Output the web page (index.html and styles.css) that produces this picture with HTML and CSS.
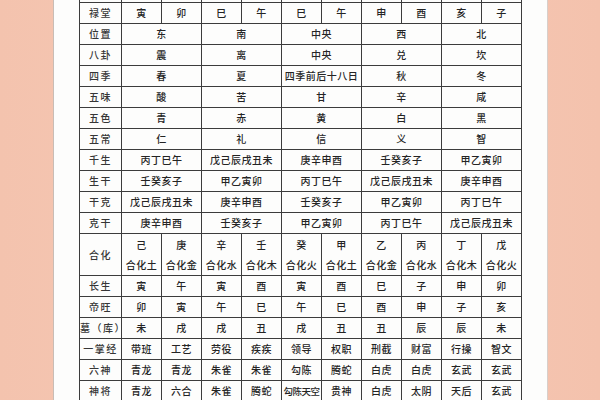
FILE: index.html
```html
<!DOCTYPE html>
<html lang="zh">
<head>
<meta charset="utf-8">
<link rel="stylesheet" href="styles.css">
</head>
<body>
<div class="page">
  <div class="paper">
    <table class="chart">
      <colgroup>
        <col class="c-label">
        <col class="c-d"><col class="c-d"><col class="c-d"><col class="c-d"><col class="c-d">
        <col class="c-d"><col class="c-d"><col class="c-d"><col class="c-d"><col class="c-d">
      </colgroup>
      <tr class="cut"><td></td><td></td><td></td><td></td><td></td><td></td><td></td><td></td><td></td><td></td><td></td></tr>
      <tr><td class="lbl">禄堂</td><td>寅</td><td>卯</td><td>巳</td><td>午</td><td>巳</td><td>午</td><td>申</td><td>酉</td><td>亥</td><td>子</td></tr>
      <tr><td class="lbl">位置</td><td colspan="2">东</td><td colspan="2">南</td><td colspan="2">中央</td><td colspan="2">西</td><td colspan="2">北</td></tr>
      <tr><td class="lbl">八卦</td><td colspan="2">震</td><td colspan="2">离</td><td colspan="2">中央</td><td colspan="2">兑</td><td colspan="2">坎</td></tr>
      <tr><td class="lbl">四季</td><td colspan="2">春</td><td colspan="2">夏</td><td colspan="2">四季前后十八日</td><td colspan="2">秋</td><td colspan="2">冬</td></tr>
      <tr><td class="lbl">五味</td><td colspan="2">酸</td><td colspan="2">苦</td><td colspan="2">甘</td><td colspan="2">辛</td><td colspan="2">咸</td></tr>
      <tr><td class="lbl">五色</td><td colspan="2">青</td><td colspan="2">赤</td><td colspan="2">黄</td><td colspan="2">白</td><td colspan="2">黑</td></tr>
      <tr><td class="lbl">五常</td><td colspan="2">仁</td><td colspan="2">礼</td><td colspan="2">信</td><td colspan="2">义</td><td colspan="2">智</td></tr>
      <tr><td class="lbl">千生</td><td colspan="2">丙丁巳午</td><td colspan="2">戊己辰戌丑未</td><td colspan="2">庚辛申酉</td><td colspan="2">壬癸亥子</td><td colspan="2">甲乙寅卯</td></tr>
      <tr><td class="lbl">生干</td><td colspan="2">壬癸亥子</td><td colspan="2">甲乙寅卯</td><td colspan="2">丙丁巳午</td><td colspan="2">戊己辰戌丑未</td><td colspan="2">庚辛申酉</td></tr>
      <tr><td class="lbl">干克</td><td colspan="2">戊己辰戌丑未</td><td colspan="2">庚辛申酉</td><td colspan="2">壬癸亥子</td><td colspan="2">甲乙寅卯</td><td colspan="2">丙丁巳午</td></tr>
      <tr><td class="lbl">克干</td><td colspan="2">庚辛申酉</td><td colspan="2">壬癸亥子</td><td colspan="2">甲乙寅卯</td><td colspan="2">丙丁巳午</td><td colspan="2">戊己辰戌丑未</td></tr>
      <tr class="tall">
        <td class="lbl">合化</td>
        <td><span class="l1">己</span><span class="l2">合化土</span></td>
        <td><span class="l1">庚</span><span class="l2">合化金</span></td>
        <td><span class="l1">辛</span><span class="l2">合化水</span></td>
        <td><span class="l1">壬</span><span class="l2">合化木</span></td>
        <td><span class="l1">癸</span><span class="l2">合化火</span></td>
        <td><span class="l1">甲</span><span class="l2">合化土</span></td>
        <td><span class="l1">乙</span><span class="l2">合化金</span></td>
        <td><span class="l1">丙</span><span class="l2">合化水</span></td>
        <td><span class="l1">丁</span><span class="l2">合化木</span></td>
        <td><span class="l1">戊</span><span class="l2">合化火</span></td>
      </tr>
      <tr><td class="lbl">长生</td><td>寅</td><td>午</td><td>寅</td><td>酉</td><td>寅</td><td>酉</td><td>巳</td><td>子</td><td>申</td><td>卯</td></tr>
      <tr><td class="lbl">帝旺</td><td>卯</td><td>寅</td><td>午</td><td>巳</td><td>午</td><td>巳</td><td>酉</td><td>申</td><td>子</td><td>亥</td></tr>
      <tr><td class="lbl">墓（库）</td><td>未</td><td>戌</td><td>戌</td><td>丑</td><td>戌</td><td>丑</td><td>丑</td><td>辰</td><td>辰</td><td>未</td></tr>
      <tr><td class="lbl">一掌经</td><td>带班</td><td>工艺</td><td>劳役</td><td>疾疾</td><td>领导</td><td>权职</td><td>刑截</td><td>财富</td><td>行操</td><td>智文</td></tr>
      <tr><td class="lbl">六神</td><td>青龙</td><td>青龙</td><td>朱雀</td><td>朱雀</td><td>勾陈</td><td>腾蛇</td><td>白虎</td><td>白虎</td><td>玄武</td><td>玄武</td></tr>
      <tr><td class="lbl">神将</td><td>青龙</td><td>六合</td><td>朱雀</td><td>腾蛇</td><td class="tight">勾陈天空</td><td>贵神</td><td>白虎</td><td>太阴</td><td>天后</td><td>玄武</td></tr>
    </table>
  </div>
</div>
</body>
</html>
```

FILE: styles.css
```css
html, body {
  margin: 0;
  padding: 0;
  background: #f5c6b2;
}

.page {
  width: 600px;
  height: 400px;
  overflow: hidden;
  display: flex;
  background: linear-gradient(90deg, #f4c3ae 0%, #f6c9b6 50%, #f4c2ad 100%);
}

.paper {
  margin-left: 53px;
  width: 495px;
  height: 400px;
  background: #fdfdfc;
  border-left: 1px solid #c9bdb6;
  border-right: 1px solid #d8cfca;
  box-sizing: border-box;
  padding-left: 25px;
  overflow: hidden;
}

.chart {
  border-collapse: collapse;
  table-layout: fixed;
  width: 443px;
  margin-top: -19px;
  font-family: "Noto Sans CJK SC", "Noto Sans CJK JP", sans-serif;
  font-size: 10px;
  font-weight: 500;
  color: #242424;
}

.c-label { width: 42px; }
.c-d { width: 40px; }

.chart td {
  border: 1px solid #3c3c3c;
  height: 20px;
  padding: 0;
  text-align: center;
  vertical-align: middle;
  white-space: nowrap;
  line-height: 12px;
  letter-spacing: 0.5px;
}

.chart td.lbl {
  color: #363636;
  letter-spacing: 1.5px;
}

.chart tr.tall td {
  height: 41px;
}

.l1, .l2 {
  display: block;
  line-height: 20px;
}

.chart td.tight {
  letter-spacing: -0.5px;
  font-size: 9.5px;
}
```
